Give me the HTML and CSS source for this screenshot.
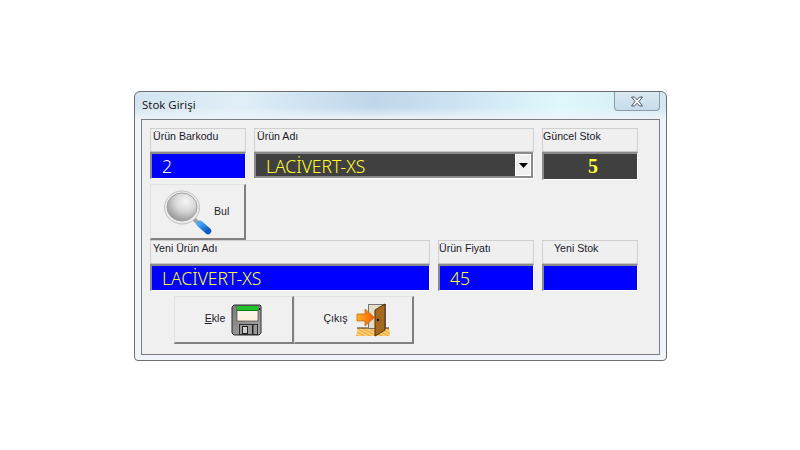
FILE: index.html
```html
<!DOCTYPE html>
<html lang="tr">
<head>
<meta charset="utf-8">
<title>Stok Girişi</title>
<link rel="stylesheet" href="styles.css">
</head>
<body>
<div class="window">
  <div class="titlebar">
    <span class="title">Stok Girişi</span>
    <div class="close">
      <svg width="14" height="11" viewBox="0 0 14 11"><path d="M1.500 1h3L7 3.800 9.500 1h3L9 5.500 12.500 10h-3L7 7.200 4.500 10h-3L5 5.500z" fill="#f4f7f9" stroke="#4d5862" stroke-width="1"/></svg>
    </div>
  </div>
  <div class="client">
    <div class="form">
      <div class="field f-barkod">
        <div class="label">Ürün Barkodu</div>
        <div class="value blue white">2</div>
      </div>
      <div class="field f-ad">
        <div class="label">Ürün Adı</div>
        <div class="value dark combo"><span>LACİVERT-XS</span>
          <div class="arrow"><svg width="9" height="5" viewBox="0 0 9 5"><path d="M0 0h9L4.500 5z" fill="#000"/></svg></div>
        </div>
      </div>
      <div class="field f-stok">
        <div class="label flush">Güncel Stok</div>
        <div class="value dark num">5</div>
      </div>
      <div class="bul">
        <svg class="lens" width="48" height="46" viewBox="0 0 48 46">
          <defs>
            <radialGradient id="g" cx="0.62" cy="0.3" r="0.8"><stop offset="0" stop-color="#f6f6f6"/><stop offset="0.45" stop-color="#d6d6d6"/><stop offset="1" stop-color="#8a8a8a"/></radialGradient>
            <linearGradient id="h" x1="0" y1="0" x2="1" y2="1"><stop offset="0" stop-color="#45a4f5"/><stop offset="1" stop-color="#0a58c0"/></linearGradient>
          </defs>
          <path d="M30 29l6 6" stroke="#a0a0a0" stroke-width="4"/>
          <path d="M36 34l8 7" stroke="url(#h)" stroke-width="6.500" stroke-linecap="round"/>
          <ellipse cx="18" cy="17.500" rx="17.500" ry="16.500" fill="#ececec" stroke="#c0c0c0"/>
          <ellipse cx="18" cy="17" rx="15" ry="14" fill="url(#g)" stroke="#a0a0a0"/>
        </svg>
        <span class="btn-text">Bul</span>
      </div>
      <div class="field f-yeni">
        <div class="label">Yeni Ürün Adı</div>
        <div class="value blue">LACİVERT-XS</div>
      </div>
      <div class="field f-fiyat">
        <div class="label flush">Ürün Fiyatı</div>
        <div class="value blue">45</div>
      </div>
      <div class="field f-ystok">
        <div class="label indent">Yeni Stok</div>
        <div class="value blue"></div>
      </div>
    </div>
    <div class="actions">
      <div class="btn">
        <span class="btn-text"><u>E</u>kle</span>
        <svg width="32" height="32" viewBox="0 0 32 32">
          <defs><linearGradient id="f" x1="0" y1="0" x2="1" y2="1"><stop offset="0" stop-color="#7c7c7c"/><stop offset="1" stop-color="#a8a8a8"/></linearGradient>
          <linearGradient id="c" x1="0" y1="0" x2="0" y2="1"><stop offset="0" stop-color="#fbfbf0"/><stop offset="1" stop-color="#fdeedd"/></linearGradient></defs>
          <path d="M3 1h26l1 1v27l-2 2H3l-2-2V3z" fill="url(#f)" stroke="#2c2c2c"/>
          <rect x="6" y="2" width="21" height="15" fill="url(#c)" stroke="#333" stroke-width="0.600"/>
          <rect x="6" y="2" width="21" height="4" fill="#1fc22a"/>
          <rect x="6" y="6" width="21" height="1" fill="#0a7a12"/>
          <rect x="28" y="4" width="1" height="2" fill="#111"/>
          <rect x="8.500" y="20.500" width="18" height="10" fill="#9a9a9a" stroke="#2e2e2e"/>
          <rect x="11.500" y="22.500" width="5" height="7" fill="#cfcfcf" stroke="#222"/>
          <rect x="21" y="21" width="1.500" height="9" fill="#222"/>
        </svg>
      </div>
      <div class="btn btn-exit">
        <span class="btn-text">Çıkış</span>
        <svg width="34" height="34" viewBox="0 0 34 34">
          <defs><pattern id="p" width="3" height="3" patternUnits="userSpaceOnUse" patternTransform="rotate(30)"><rect width="3" height="3" fill="#ffd27a"/><rect width="3" height="1" fill="#f59a2e"/></pattern>
          <linearGradient id="a" x1="0" y1="0" x2="1" y2="0"><stop offset="0" stop-color="#ffb020"/><stop offset="1" stop-color="#f25a08"/></linearGradient></defs>
          <path d="M2 25h31l1 8H0z" fill="url(#p)"/>
          <path d="M1 25h11M28 25h5" stroke="#3a2a10" stroke-width="1"/>
          <rect x="12.500" y="1.500" width="17" height="24" fill="#e4dccb" stroke="#777"/>
          <path d="M19 7l10-6v26l-10 6z" fill="#a6691c" stroke="#4e2f08"/>
          <circle cx="22" cy="17" r="1.300" fill="#111"/>
          <path d="M1 11h8V6l9.500 8.500L9 23v-5H1z" fill="url(#a)" stroke="#c06000" stroke-width="0.700"/>
        </svg>
      </div>
    </div>
  </div>
</div>
</body>
</html>
```
FILE: styles.css
```css
html, body { margin: 0; padding: 0; background: #fff; }
body { width: 800px; height: 450px; padding: 91px 0 0 134px; box-sizing: border-box; overflow: hidden; }

.window {
  width: 533px; height: 270px; box-sizing: border-box;
  border: 1px solid #6d6f72; border-radius: 6px 6px 4px 4px;
  background:
    linear-gradient(180deg, rgba(240,246,250,0) 0, rgba(240,246,250,0) 15px, #eef4f8 28px),
    linear-gradient(90deg, #d3e4f0 0%, #e0eef7 20%, #bfd6ea 45%, #cde2f1 60%, #e0f8fc 80%, #d2e8f3 100%);
  padding: 0 6px 5px 6px;
  display: flex; flex-direction: column;
}
.titlebar { height: 27px; flex: none; display: flex; justify-content: space-between; align-items: flex-start; }
.title { font: 11.500px/26px "Open Sans", sans-serif; color: #111; padding: 0 0 0 1px; }
.close {
  width: 46px; height: 19px; box-sizing: border-box;
  border: 1px solid #8c9aa6; border-top: 0; border-radius: 0 0 4px 4px;
  background: linear-gradient(#dbe9f2, #c6dbe9);
  display: flex; align-items: center; justify-content: center;
}
.client {
  flex: 1; border: 1px solid #7b7e82; background: #f0f0f0;
  padding: 8px 0 0 8px; display: flex; flex-direction: column;
}
.form {
  display: grid; grid-template-columns: 96px 176px 96px 96px; column-gap: 8px;
  grid-template-rows: 51px 61px 51px; row-gap: 0; width: 496px;
}
.field { display: flex; flex-direction: column; }
.f-barkod { grid-column: 1; grid-row: 1; }
.f-ad { grid-column: 2 / 4; grid-row: 1; }
.f-stok { grid-column: 4; grid-row: 1; }
.f-yeni { grid-column: 1 / 3; grid-row: 3; }
.f-fiyat { grid-column: 3; grid-row: 3; }
.f-ystok { grid-column: 4; grid-row: 3; }

.label {
  height: 24px; box-sizing: border-box; flex: none;
  border: 1px solid #cfcfcf; border-bottom-color: #c4c4c4; background: #efefef;
  font: 10.600px/13px "Liberation Sans", sans-serif; color: #1a1a2a; padding: 1px 0 0 2px;
}
.flush { padding-left: 0; }
.indent { padding-left: 11px; }
.value {
  height: 27px; box-sizing: border-box; flex: none;
  border: 1px solid #fff; border-top: 2px solid #8a8a8a; border-left: 2px solid #8a8a8a;
  font: 300 17.500px/24px "Noto Sans", sans-serif; color: #ffff33; padding-left: 10px;
  white-space: nowrap; overflow: hidden;
}
.blue { background: #0000ff; }
.white { color: #fff; }
.dark { background: #404040; }
.combo {
  display: flex; justify-content: space-between; padding-right: 0; line-height: 24px;
  border-right: 2px solid #8a8a8a; border-bottom: 2px solid #8a8a8a;
  width: calc(100% - 1px); height: 26px; box-shadow: 1px 1px 0 #fff;
}
.arrow {
  width: 16px; height: 22px; box-sizing: border-box; background: #f0f0f0; flex: none;
  border: 1px solid #fff; display: flex; align-items: center; justify-content: center;
}
.num { text-align: center; font: bold 20px/24px "Liberation Serif", serif; padding: 0 0 0 5px; height: 28px; }

.bul, .btn {
  box-sizing: border-box; background: #f0f0f0;
  border: 1px solid #e2e2e2; border-right: 2px solid #808080; border-bottom: 2px solid #808080;
  display: flex; align-items: center;
}
.bul { grid-column: 1; grid-row: 2; height: 56px; margin-top: 5px; padding: 3px 0 0 13px; gap: 2px; }
.btn-text { font: 10.600px "Liberation Sans", sans-serif; color: #1a1a2a; margin-bottom: 4px; }
.actions { display: flex; padding-left: 24px; margin-top: 5px; }
.btn { width: 120px; height: 48px; justify-content: center; gap: 6px; padding-left: 1px; }
.btn-exit { gap: 8px; padding-left: 6px; }
```
